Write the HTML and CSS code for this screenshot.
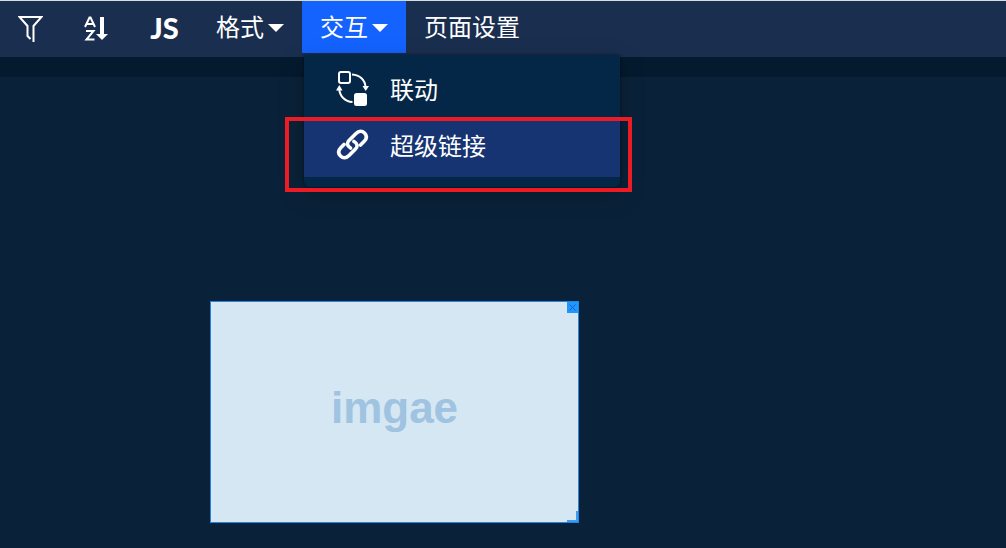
FILE: index.html
```
<!DOCTYPE html>
<html lang="zh-CN">
<head>
  <meta charset="UTF-8">
  <title>页面设计器</title>
  <meta name="viewport" content="width=device-width, initial-scale=1.0">
  <link rel="stylesheet" href="styles.css">
</head>
<body>
  <header class="toolbar">
    <button class="tool icon-tool" type="button" aria-label="筛选">
      <svg width="25" height="28" viewBox="0 0 25 28" fill="none" stroke="currentColor" stroke-width="2">
        <path d="M15.500 27V11L23.500 2H1.500L9.500 11V21L12.500 24"/>
      </svg>
    </button>
    <button class="tool icon-tool" type="button" aria-label="排序">
      <svg width="24" height="28" viewBox="0 0 24 28" fill="none" stroke="currentColor" stroke-width="2">
        <path d="M1 12L5.500 2.500H6.500L11 12M3 9H9M2 16H9.500L2.500 24.500H10.500"/>
        <path d="M18 2V20" stroke-width="4"/>
        <path d="M12 19H24L18 25Z" fill="currentColor" stroke="none"/>
      </svg>
    </button>
    <button class="tool js-tool" type="button">JS</button>
    <button class="tool" type="button">格式<span class="caret"></span></button>
    <div class="dropdown">
      <button class="tool active" type="button" aria-expanded="true">交互<span class="caret"></span></button>
      <div class="menu">
        <button class="menu-item" type="button">
          <svg width="34" height="36" viewBox="0 0 34 36" fill="none" stroke="currentColor" stroke-width="2">
            <rect x="3" y="2" width="11" height="11" rx="2"/>
            <rect x="18" y="23" width="13" height="13" rx="2.500" fill="currentColor" stroke="none"/>
            <path d="M16 4.500C24 5 29 10 29.500 17M16.500 32C9 31.500 3.500 26 3.300 19"/>
            <path d="M26.500 16H33L29.700 21ZM0 20.500H6.500L3.300 15Z" fill="currentColor" stroke="none"/>
          </svg>
          联动
        </button>
        <button class="menu-item selected" type="button">
          <svg width="34" height="36" viewBox="0 0 34 36" fill="none" stroke="currentColor" stroke-width="3.600" stroke-linecap="round">
            <path d="M14.500 22C11 20 10.500 17 13 14.500L20 7.500C23 4.500 26 4.500 28.500 7C31 9.500 31 12.500 28 15.500L24.500 19"/>
            <path d="M18 15.500C21.500 17.500 22 20.500 19.500 23L13 29.500C10 32.500 7 32.500 4.500 30C2 27.500 2 24.500 5 21.500L8 18.500"/>
          </svg>
          超级链接
          <span class="marker"></span>
        </button>
      </div>
    </div>
    <button class="tool" type="button">页面设置</button>
  </header>

  <main class="canvas">
    <div class="widget">
      <span class="widget-text">imgae</span>
      <button class="widget-close" type="button" aria-label="关闭">
        <svg width="7" height="7" viewBox="0 0 7 7" stroke="currentColor" stroke-width="1">
          <path d="M0.500 0.500L6.500 6.500M6.500 0.500L0.500 6.500"/>
        </svg>
      </button>
      <span class="widget-resize"></span>
    </div>
  </main>
</body>
</html>
```

FILE: styles.css
```
:root {
  --bar: #1a2e4f;
  --canvas: #0a2239;
  --band: #041a2e;
  --menu: #052747;
  --selected: #163372;
  --accent: #1463ff;
  --marker: #ed1c24;
}

* {
  box-sizing: border-box;
}

body {
  display: flex;
  flex-direction: column;
  min-height: 100vh;
  margin: 0;
  background-color: var(--canvas);
  color: #fff;
  font-family: "Noto Sans CJK SC", sans-serif;
}

button {
  border: none;
  background: none;
  color: inherit;
  font-family: inherit;
  font-size: 24px;
  cursor: pointer;
}

.toolbar {
  display: flex;
  align-items: flex-start;
  padding-bottom: 4px;
  border-top: 1px solid #d5dde2;
  background-color: var(--bar);
}

.tool {
  display: flex;
  align-items: center;
  gap: 4px;
  height: 52px;
  padding: 0 18px 4px;
  white-space: nowrap;
}

.tool.active {
  background-color: var(--accent);
}

.icon-tool {
  margin-right: 5px;
  padding-top: 8px;
}

.js-tool {
  justify-content: center;
  min-width: 67px;
  padding-bottom: 0;
  font-family: Lato, sans-serif;
  font-size: 29px;
  font-weight: 900;
}

.caret {
  margin-top: 6px;
  border: 8px solid transparent;
  border-top-color: #fff;
  border-bottom: none;
}

.dropdown {
  position: relative;
}

.menu {
  position: absolute;
  top: 54px;
  left: 2px;
  z-index: 1;
  width: 316px;
  padding: 10px 0;
  border-radius: 0 0 6px 6px;
  background-color: var(--menu);
  box-shadow: 0 0 3px rgba(0, 0, 0, 0.4), 0 8px 24px rgba(0, 0, 0, 0.25);
}

.menu-item {
  position: relative;
  display: flex;
  align-items: center;
  gap: 20px;
  width: 100%;
  height: 56px;
  padding: 0 32px 10px;
  text-align: left;
}

.menu-item.selected {
  background-color: var(--selected);
}

.marker {
  position: absolute;
  top: -4px;
  right: -12px;
  bottom: -15px;
  left: -19px;
  border: 4px solid var(--marker);
}

.canvas {
  position: relative;
  flex: 1;
  border-top: 20px solid var(--band);
}

.widget {
  position: absolute;
  top: 224px;
  left: 210px;
  display: flex;
  align-items: center;
  justify-content: center;
  width: 369px;
  height: 222px;
  padding-bottom: 8px;
  border: 1px solid #2385dc;
  background-color: #d5e7f3;
}

.widget-text {
  color: #9fc3e0;
  font-family: "Liberation Sans", sans-serif;
  font-size: 44px;
  font-weight: bold;
}

.widget-close {
  position: absolute;
  top: 0;
  right: 0;
  display: flex;
  align-items: center;
  justify-content: center;
  width: 11px;
  height: 11px;
  padding: 0;
  background-color: #2196ff;
  color: #1260d0;
}

.widget-resize {
  position: absolute;
  right: 0;
  bottom: 0;
  width: 11px;
  height: 11px;
  border-right: 2px solid #3b9bf5;
  border-bottom: 2px solid #3b9bf5;
}
```
